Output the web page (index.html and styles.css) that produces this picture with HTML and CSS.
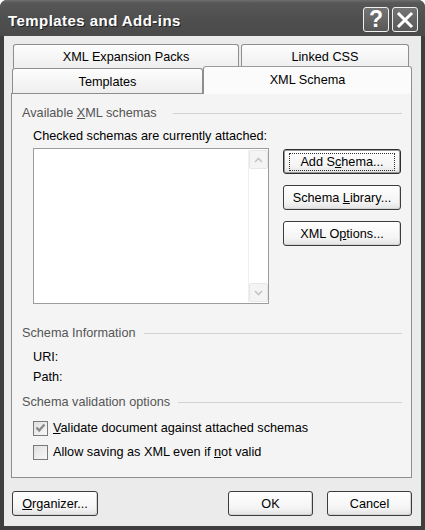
FILE: index.html
```html
<!DOCTYPE html>
<html>
<head>
<meta charset="utf-8">
<link rel="stylesheet" href="styles.css">
</head>
<body>
<div class="window">
  <div class="titlebar">
    <span class="title">Templates and Add-ins</span>
    <div class="tbtns">
      <span class="tbtn help">?</span>
      <span class="tbtn close"><svg width="18" height="18" viewBox="0 0 18 18"><path d="M3 3 L15 15 M15 3 L3 15" stroke="#fff" stroke-width="3" stroke-linecap="square"/></svg></span>
    </div>
  </div>
  <div class="client">
    <div class="tabrow row1">
      <div class="tab t1"><span>XML Expansion Packs</span></div>
      <div class="tab t2"><span>Linked CSS</span></div>
    </div>
    <div class="tabrow row2">
      <div class="tab t3"><span>Templates</span></div>
      <div class="tab sel"><span>XML Schema</span></div>
    </div>
    <div class="panel">
      <div class="group g1"><span>Available <u>X</u>ML schemas</span><i class="rule"></i></div>
      <div class="indent checked-lbl">Checked schemas are currently attached:</div>
      <div class="listrow">
        <div class="listbox">
          <div class="listarea"></div>
          <div class="sb">
            <div class="sbbtn"><svg width="9" height="6" viewBox="0 0 9 6"><path d="M1 5 L4.5 1.5 L8 5" fill="none" stroke="#c4c4c4" stroke-width="1.6"/></svg></div>
            <div class="sbtrack"></div>
            <div class="sbbtn"><svg width="9" height="6" viewBox="0 0 9 6"><path d="M1 1 L4.5 4.5 L8 1" fill="none" stroke="#c4c4c4" stroke-width="1.6"/></svg></div>
          </div>
        </div>
        <div class="btncol">
          <div class="btn def"><span class="focus">Add S<u>c</u>hema...</span></div>
          <div class="btn"><span>Schema <u>L</u>ibrary...</span></div>
          <div class="btn"><span>XML O<u>p</u>tions...</span></div>
        </div>
      </div>
      <div class="group g2"><span>Schema Information</span><i class="rule"></i></div>
      <div class="indent uri">URI:</div>
      <div class="indent path">Path:</div>
      <div class="group g3"><span>Schema validation options</span><i class="rule"></i></div>
      <div class="indent chkrow c1"><span class="chk on"><svg width="11" height="10" viewBox="0 0 11 10"><path d="M1.5 4.5 L4.2 7.5 L9.5 1.5" fill="none" stroke="#8a8a8a" stroke-width="2.4"/></svg></span><span><u>V</u>alidate document against attached schemas</span></div>
      <div class="indent chkrow c2"><span class="chk"></span><span>Allow saving as XML even if <u>n</u>ot valid</span></div>
    </div>
    <div class="footer">
      <div class="btn org"><span><u>O</u>rganizer...</span></div>
      <div class="spacer"></div>
      <div class="btn ok"><span>OK</span></div>
      <div class="btn cancel"><span>Cancel</span></div>
    </div>
  </div>
</div>
</body>
</html>
```
FILE: styles.css
```css
* { box-sizing: border-box; }
html, body { margin: 0; padding: 0; background: #fff; }
body { font-family: "Liberation Sans", Arial, sans-serif; font-size: 12.7px; color: #000; }

.window {
  width: 425px; height: 530px;
  background: #3e3e3e;
  border-radius: 7px 7px 0 0;
  display: flex; flex-direction: column;
  overflow: hidden;
}
.titlebar {
  height: 36px; flex: none;
  display: flex; align-items: center; justify-content: space-between;
  padding: 0 7px 0 8px;
  background: linear-gradient(#6e6e6e 0, #575757 3px, #4f4f4f 50%, #4a4a4a 100%);
}
.title {
  color: #fff; font-weight: bold; font-size: 15px;
  font-family: "Liberation Sans", sans-serif;
  letter-spacing: 0.45px;
  text-shadow: 1px 1px 0 #222;
  margin-top: 5px;
}
.tbtns { display: flex; gap: 3px; margin-top: 3px; }
.tbtn {
  width: 26px; height: 25px;
  border: 1px solid #f0f0f0; border-radius: 3px;
  background: linear-gradient(#747474, #585858);
  display: flex; align-items: center; justify-content: center;
  color: #fff; font-weight: bold; font-size: 23px;
  font-family: "Liberation Sans", sans-serif;
}
.tbtn.help { line-height: 1; }

.client {
  flex: 1;
  margin: 0 4px 4px 4px;
  background: #ebebeb;
  padding: 8px 9px 0 7px;
  display: flex; flex-direction: column;
}

.tabrow { display: flex; }
.row1 { height: 24px; margin-left: 2px; gap: 2px; }
.row2 { height: 28px; margin-top: -2px; margin-left: 1px; align-items: flex-end; }
.tab {
  border: 1px solid #8e8e8e; border-bottom: none;
  border-radius: 3px 3px 0 0;
  background: linear-gradient(#fdfdfd, #eeeeee);
  display: flex; align-items: center; justify-content: center;
  height: 100%;
  padding-top: 1px;
}
.t1 { width: 226px; }
.t2 { width: 168px; }
.t3 { width: 191px; height: 25px; margin-bottom: 1px; }
.sel {
  width: 209px; height: 28px;
  background: #fbfbfb;
  position: relative; z-index: 1;
  padding-bottom: 3px;
  border-top-color: #9a9a9a;
}

.panel {
  margin-top: -1px;
  height: 385px; flex: none;
  border: 1px solid #8e8e8e;
  background: #f4f4f4;
  padding: 11px 9px 0 10px;
  display: flex; flex-direction: column;
}
.group { display: flex; align-items: center; height: 16px; color: #555; }
.group .rule { flex: 1; height: 1px; background: #d2d2d2; margin-left: 8px; }
.g1 .rule { margin-left: 16px; }
.indent { margin-left: 11px; }
.checked-lbl { height: 16px; line-height: 16px; margin-top: 7px; }

.listrow { display: flex; margin-top: 4px; }
.listbox {
  width: 236px; height: 156px;
  border: 1px solid #9c9c9c;
  background: #fff;
  display: flex;
  margin-left: 11px;
}
.listarea { flex: 1; }
.sb {
  width: 20px; display: flex; flex-direction: column;
  border-left: 1px solid #f0f0f0;
  padding: 1px 1px 1px 0;
}
.sbbtn {
  height: 19px; width: 19px;
  background: #f4f4f4; border: 1px solid #e6e6e6; border-radius: 2px;
  display: flex; align-items: center; justify-content: center;
}
.sbtrack { flex: 1; }

.btncol { display: flex; flex-direction: column; gap: 11px; margin-left: 14px; margin-top: 1px; }
.btn {
  width: 118px; height: 25px;
  border: 1px solid #3c3c3c; border-radius: 3px;
  background: linear-gradient(#ffffff, #f4f4f4 70%, #e2e2e2);
  display: flex; align-items: center; justify-content: center;
  box-shadow: inset -1px -1px 0 #d4d4d4;
}
.btn.def { box-shadow: inset 0 0 0 1px #9a9a9a; border-color: #2e2e2e; }
.focus { border: 1px dotted #333; padding: 1px 10px; }

.g2 { margin-top: 21px; }
.uri { margin-top: 8px; height: 16px; line-height: 16px; }
.path { margin-top: 4px; height: 16px; line-height: 16px; }
.g3 { margin-top: 9px; }
.chkrow { display: flex; align-items: center; height: 16px; }
.c1 { margin-top: 10px; }
.c2 { margin-top: 8px; }
.chk {
  width: 15px; height: 15px; flex: none;
  border: 1px solid #7a7a7a;
  background: linear-gradient(135deg, #e0e0e0, #f8f8f8);
  margin-right: 5px;
  display: flex; align-items: center; justify-content: center;
}

.footer { display: flex; margin-top: 13px; margin-left: 1px; gap: 14px; }
.spacer { flex: 1; }
.footer .btn { width: 85px; }
.footer .org { width: 86px; }
```
